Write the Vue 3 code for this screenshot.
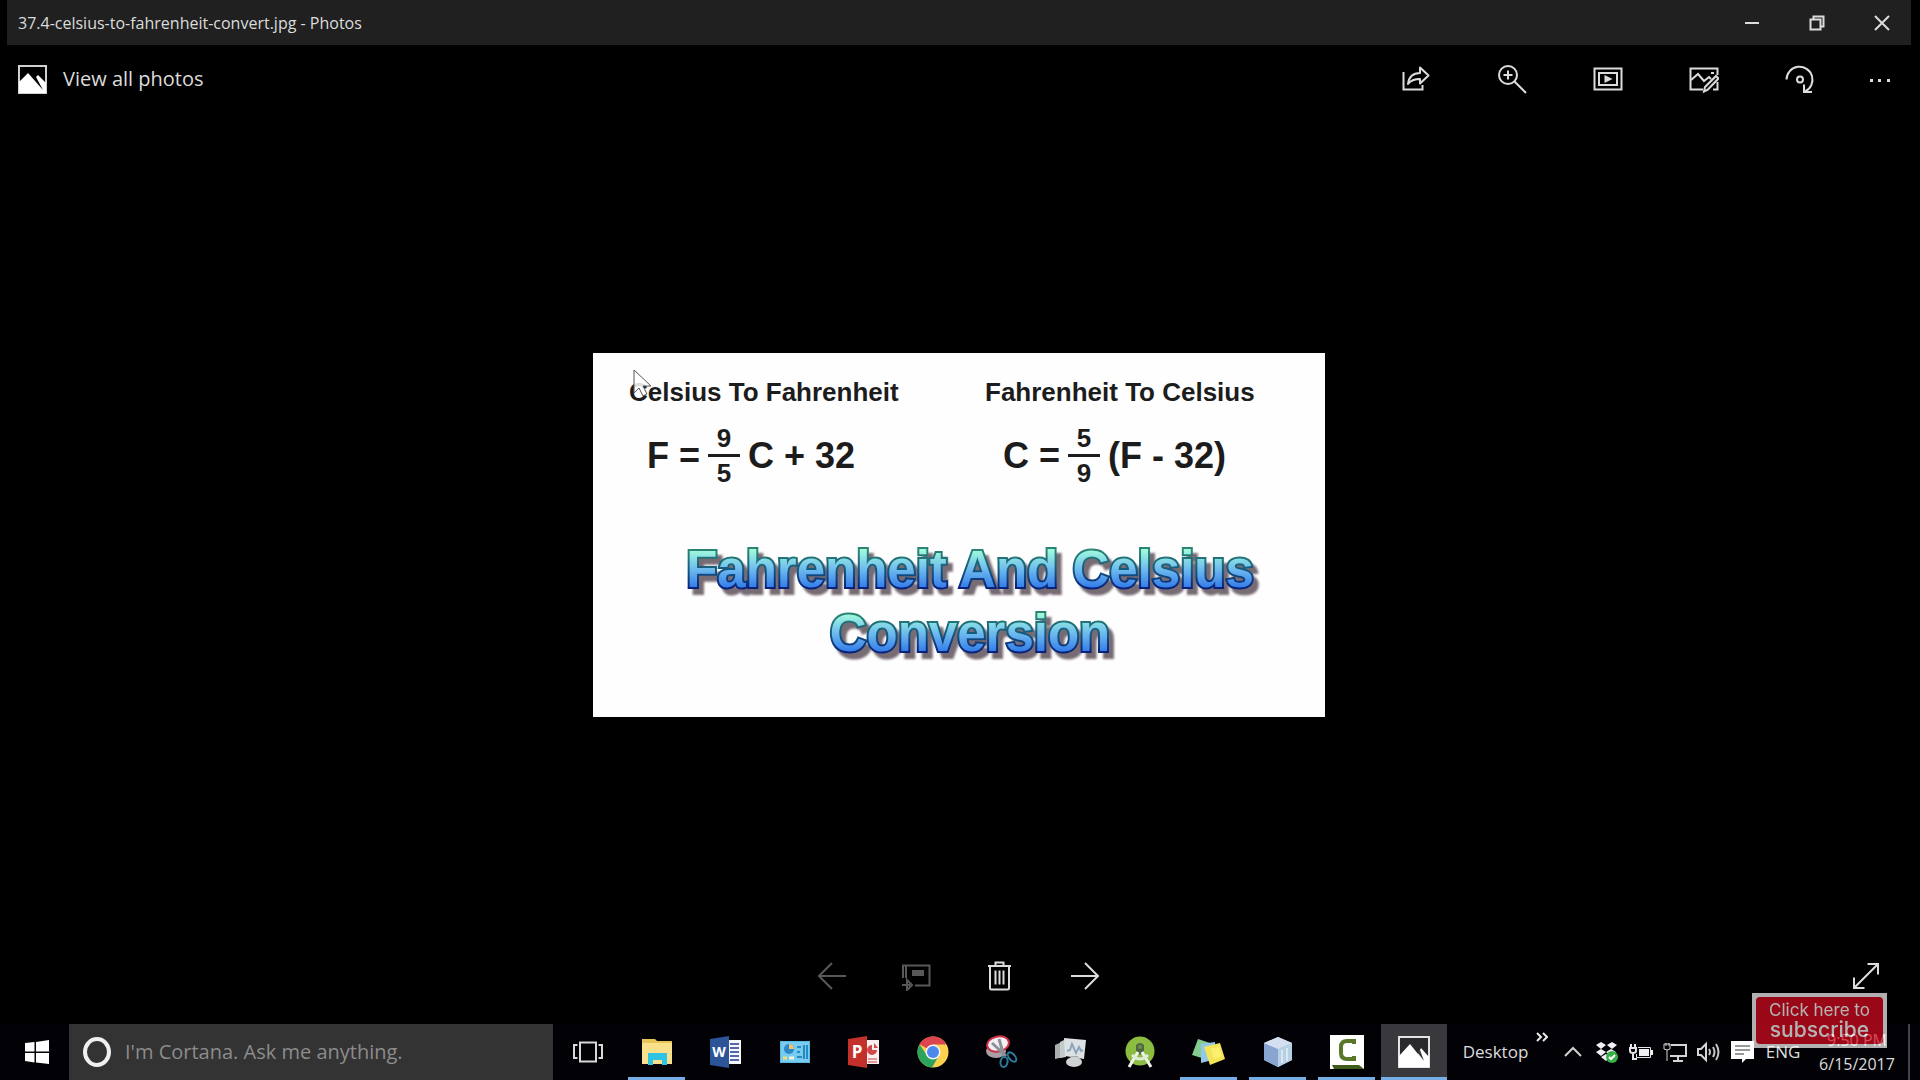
<script setup>
import { ref } from 'vue'

const query = ref('')

const formulas = [
  { title: 'Celsius To Fahrenheit', left: 'F =', top: '9', bottom: '5', right: 'C + 32' },
  { title: 'Fahrenheit To Celsius', left: 'C =', top: '5', bottom: '9', right: '(F - 32)' },
]
</script>

<template>
  <div class="desktop">
    <main class="window">
      <header class="titlebar">
        <h1 class="title">37.4-celsius-to-fahrenheit-convert.jpg - Photos</h1>
        <div class="caption-buttons">
          <button type="button" aria-label="Minimize">
            <svg width="16" height="16" viewBox="0 0 16 16"><path d="M1 8h14" class="line" /></svg>
          </button>
          <button type="button" aria-label="Restore">
            <svg width="16" height="16" viewBox="0 0 16 16">
              <path d="M1.500 4.500h10v10h-10zM4.500 4V1.500h10v10H12" class="line" />
            </svg>
          </button>
          <button type="button" aria-label="Close">
            <svg width="16" height="16" viewBox="0 0 16 16"><path d="M1 1l14 14M15 1L1 15" class="line" /></svg>
          </button>
        </div>
      </header>

      <nav class="commands">
        <a href="#all" class="view-all">
          <svg width="29" height="29" viewBox="0 0 29 29">
            <rect x="1" y="1" width="27" height="27" fill="none" stroke="#d0d0d0" stroke-width="2" />
            <path d="M1 17L10 8l15 17-7-13 2-2 8 8v10H1z" fill="#fff" />
          </svg>
          <span>View all photos</span>
        </a>
        <div class="tools">
          <button type="button" aria-label="Share">
            <svg width="30" height="30" viewBox="0 0 30 30">
              <path d="M2.500 8v17.500h19V21" class="stroke" />
              <path d="M7 20c1-8 5-11 12-11V3.500l8.500 8-8.500 8V15c-6 0-9 1-12 5z" class="stroke" stroke-linejoin="round" />
            </svg>
          </button>
          <button type="button" aria-label="Zoom">
            <svg width="30" height="30" viewBox="0 0 30 30">
              <circle cx="11" cy="11" r="9" class="stroke" />
              <path d="M11 6.500v9M6.500 11h9M17.500 17.500L29 29" class="stroke" />
            </svg>
          </button>
          <button type="button" aria-label="Slideshow">
            <svg width="30" height="30" viewBox="0 0 30 30">
              <path d="M1.500 4.500h27v21h-27z" class="stroke" />
              <path d="M6 9h18v12H6z" class="stroke" />
              <path d="M11.500 11v8l8-4z" fill="#dcdcdc" />
            </svg>
          </button>
          <button type="button" aria-label="Edit">
            <svg width="30" height="30" viewBox="0 0 30 30">
              <path d="M14 25.500H1.500v-21h27V11M24 25.500h4.500V18" class="stroke" />
              <path d="M2 16l7-6 6 7 5-4 2 2" class="stroke" />
              <rect x="22" y="8" width="3" height="2" fill="#dcdcdc" />
              <path d="M16 23L27 12l2.500 2.500L18.500 26 15 27.500z" fill="#111" stroke="#dcdcdc" stroke-width="2" />
            </svg>
          </button>
          <button type="button" aria-label="Rotate">
            <svg width="30" height="30" viewBox="0 0 30 30">
              <path d="M1.500 15.500A13 13 0 1 1 20 27.500" class="stroke" />
              <path d="M19 20.500v7.500h8" class="stroke" />
              <circle cx="15" cy="15.500" r="3" class="stroke" />
            </svg>
          </button>
          <button type="button" class="more" aria-label="See more">
            <svg width="24" height="30" viewBox="0 0 24 30">
              <path d="M2 15h3v3H2zM10 15h3v3h-3zM19 15h3v3h-3z" fill="#dcdcdc" />
            </svg>
          </button>
        </div>
      </nav>

      <section class="stage">
        <figure class="photo">
          <div class="formulas">
            <div v-for="f in formulas" :key="f.title" class="formula">
              <h2>{{ f.title }}</h2>
              <p class="equation">
                <span>{{ f.left }}</span>
                <span class="fraction"><span class="over">{{ f.top }}</span><span class="under">{{ f.bottom }}</span></span>
                <span>{{ f.right }}</span>
              </p>
            </div>
          </div>
          <svg class="wordart" width="620" height="150" viewBox="0 0 620 150">
            <defs>
              <linearGradient id="fill1" gradientUnits="userSpaceOnUse" x1="0" y1="14" x2="0" y2="54">
                <stop offset="0" stop-color="#a0fbdc" /><stop offset="0.5" stop-color="#6cb8ee" /><stop offset="1" stop-color="#2c74e8" />
              </linearGradient>
              <linearGradient id="edge1" gradientUnits="userSpaceOnUse" x1="0" y1="14" x2="0" y2="54">
                <stop offset="0" stop-color="#2c8474" /><stop offset="0.5" stop-color="#145880" /><stop offset="1" stop-color="#081c78" />
              </linearGradient>
              <linearGradient id="fill2" href="#fill1" gradientTransform="translate(0 64)" />
              <linearGradient id="edge2" href="#edge1" gradientTransform="translate(0 64)" />
            </defs>
            <g class="art">
              <text x="321" y="51" fill="url(#fill1)" stroke="url(#edge1)">Fahrenheit And Celsius</text>
              <text x="321" y="115" fill="url(#fill2)" stroke="url(#edge2)">Conversion</text>
            </g>
          </svg>
          <svg class="pointer" width="20" height="30" viewBox="0 0 20 30">
            <path d="M1 1v23l5-5 4 8 4-2-4-8h8z" fill="#fff" fill-opacity="0.85" stroke="#555" stroke-width="1" />
          </svg>
        </figure>
      </section>

      <footer class="actions">
        <div class="pager">
          <button type="button" aria-label="Previous" disabled>
            <svg width="30" height="30" viewBox="0 0 30 30"><path d="M28 15H1M14 2L1 15l13 13" class="stroke" /></svg>
          </button>
          <button type="button" aria-label="Copy to" disabled>
            <svg width="30" height="30" viewBox="0 0 30 30">
              <path d="M1 17V4.500h26.500v20H13M4 4v13" class="stroke" />
              <path d="M0 24h8M5 19l5 5-5 5z" class="stroke" />
              <rect x="10" y="9" width="12" height="6" fill="#dcdcdc" />
            </svg>
          </button>
          <button type="button" aria-label="Delete">
            <svg width="30" height="30" viewBox="0 0 30 30">
              <path d="M2 5h23M9.500 4V1.500h8V4M4 5v22q0 1.500 1.500 1.500h16q1.500 0 1.500-1.500V5" class="stroke" />
              <path d="M9.500 9.500v14M13.500 9.500v14M17.500 9.500v14" class="stroke" />
            </svg>
          </button>
          <button type="button" aria-label="Next">
            <svg width="30" height="30" viewBox="0 0 30 30"><path d="M1 15h27M15 2l13 13-13 13" class="stroke" /></svg>
          </button>
        </div>
        <button type="button" class="expand" aria-label="Full screen">
          <svg width="28" height="28" viewBox="0 0 28 28">
            <path d="M2 26L26 2M15.500 2H26v10.500M2 15.500V26h10.500" class="stroke" />
          </svg>
        </button>
      </footer>
    </main>

    <footer class="taskbar">
      <button type="button" class="start" aria-label="Start">
        <svg width="24" height="24" viewBox="0 0 24 24">
          <path d="M0 3l9.500-1v9.500H0zM11 2l13-2v11.500H11zM0 13h9.500v9.500L0 21zM11 13h13v11l-13-1.500z" fill="#fff" />
        </svg>
      </button>
      <label class="search">
        <svg width="32" height="32" viewBox="0 0 32 32"><ellipse cx="16" cy="16" rx="12" ry="13" fill="none" stroke="#f0f0f0" stroke-width="4" /></svg>
        <input v-model="query" type="text" placeholder="I'm Cortana. Ask me anything." aria-label="Search" />
      </label>

      <div class="apps">
        <button type="button" aria-label="Task view">
          <svg width="32" height="32" viewBox="0 0 32 32">
            <path d="M8 6.500h16v19H8z" fill="none" stroke="#d8d8d8" stroke-width="2" />
            <path d="M5.500 9H2v13h3.500M26.500 9H30v13h-3.500" fill="none" stroke="#d8d8d8" stroke-width="2" />
          </svg>
        </button>
        <button type="button" class="open" aria-label="File Explorer">
          <svg width="32" height="32" viewBox="0 0 32 32">
            <path d="M1 3h13l2 2h15v23H1z" fill="#e8c456" />
            <path d="M1 7h30v21H1z" fill="#fae08a" />
            <path d="M7 17h19v12h-5v-5h-9v5H7z" fill="#30c4e4" />
          </svg>
        </button>
        <button type="button" aria-label="Word">
          <svg width="32" height="32" viewBox="0 0 32 32">
            <path d="M17 4h14v24H17z" fill="#f4f6fc" />
            <path d="M20 8h9M20 12h9M20 16h9M20 20h9M20 24h9" stroke="#5468a8" stroke-width="2" />
            <path d="M0 3l19-3v32L0 29z" fill="#2c5498" />
            <text x="9" y="21" class="letter" font-size="14">W</text>
          </svg>
        </button>
        <button type="button" aria-label="Control Panel">
          <svg width="32" height="32" viewBox="0 0 32 32">
            <path d="M1 5h30v22H1z" fill="#58b8e4" />
            <path d="M2 6h28v20H2z" fill="#78ccf0" />
            <circle cx="10" cy="13" r="5" fill="#2c88c8" /><path d="M10 13V8a5 5 0 0 1 5 5z" fill="#f4c468" />
            <path d="M4 22h4" stroke="#f0e070" stroke-width="3" /><path d="M10 22h5" stroke="#e8f4e0" stroke-width="3" />
            <path d="M18 11h4M18 16h3M18 21h5M25 9v14M28 9v14" stroke="#2888c0" stroke-width="2" />
          </svg>
        </button>
        <button type="button" aria-label="PowerPoint">
          <svg width="32" height="32" viewBox="0 0 32 32">
            <path d="M17 4h14v24H17z" fill="#fbeeee" />
            <path d="M20 23h9M20 26h9" stroke="#c84444" stroke-width="1" />
            <path d="M24 9a5 5 0 1 0 5 5h-5zM26 7v5h4" fill="#d04848" />
            <path d="M0 3l19-3v32L0 29z" fill="#c4302c" />
            <text x="9" y="22" class="letter" font-size="17">P</text>
          </svg>
        </button>
        <button type="button" aria-label="Chrome">
          <svg width="32" height="32" viewBox="0 0 32 32">
            <circle cx="16" cy="16" r="15.500" fill="#fcd050" />
            <path d="M16 16L2.600 8.200A15.500 15.500 0 0 1 29.500 8.500H16z" fill="#dc4450" />
            <path d="M2.600 8.200A15.500 15.500 0 0 0 15 31.500l7-12-12 0z" fill="#2ca45c" />
            <circle cx="16" cy="16" r="7.500" fill="#f4f4f4" /><circle cx="16" cy="16" r="6" fill="#4c88ec" />
          </svg>
        </button>
        <button type="button" aria-label="Snipping Tool">
          <svg width="34" height="34" viewBox="0 0 34 34">
            <ellipse cx="11" cy="16" rx="10" ry="7" fill="#a8a0a4" />
            <ellipse cx="13" cy="9" rx="11" ry="7.500" fill="#f4f0f2" stroke="#cc3048" stroke-width="2" transform="rotate(-12 13 9)" />
            <path d="M7 8l14 13M14 4l5 17" stroke="#8c9098" stroke-width="3" />
            <ellipse cx="19" cy="27" rx="3.500" ry="5" fill="none" stroke="#2c7c9c" stroke-width="2" transform="rotate(12 19 27)" />
            <ellipse cx="27" cy="22" rx="3" ry="5.500" fill="none" stroke="#2c7c9c" stroke-width="2" transform="rotate(-40 27 22)" />
          </svg>
        </button>
        <button type="button" aria-label="Performance Monitor">
          <svg width="34" height="32" viewBox="0 0 34 32">
            <path d="M1 9l9-4v16l-9 2z" fill="#a8b0b0" /><path d="M6 6l6-3v18l-6 1z" fill="#c4caca" />
            <path d="M10 2l22 2-2 19-19-3z" fill="#dce2e4" />
            <path d="M13 15l3-1 2-6 4 9 3-6 2 4 2-1" fill="none" stroke="#8ca4bc" stroke-width="2" />
            <path d="M17 20h7l1 4h-9z" fill="#a4acac" /><ellipse cx="20" cy="26" rx="8" ry="5" fill="#d0d4d4" />
          </svg>
        </button>
        <button type="button" aria-label="Android Studio">
          <svg width="32" height="32" viewBox="0 0 32 32">
            <circle cx="16" cy="15" r="14.500" fill="#8cbc40" />
            <path d="M12 9q4-4 8 0v6l-4 4-4-4z" fill="#506840" /><circle cx="16" cy="11" r="2" fill="#708c50" />
            <path d="M14 16L5 31M18 16l9 15" stroke="#f0f4ec" stroke-width="3" />
            <path d="M8 19q8 8 16 0" fill="none" stroke="#e0ecd8" stroke-width="3" />
          </svg>
        </button>
        <button type="button" class="open" aria-label="Sticky Notes">
          <svg width="34" height="32" viewBox="0 0 34 32">
            <path d="M6 3l12 4-5 16L0 19z" fill="#84cc90" />
            <path d="M9 8l14-2 1 17-15 4z" fill="#94c8e8" />
            <path d="M12 11l16-4 5 16-15 6z" fill="#f4e458" /><path d="M19 13l8-2 3 9-8 3z" fill="#fcf070" />
          </svg>
        </button>
        <button type="button" class="open" aria-label="NetBeans">
          <svg width="32" height="32" viewBox="0 0 32 32">
            <path d="M16 1l14 6v17l-14 7L2 24V7z" fill="#b4c8e4" />
            <path d="M2 7l14 6v18L2 24z" fill="#88a4d0" /><path d="M16 1l14 6-14 6L2 7z" fill="#d4e0f0" />
            <path d="M16 13l14-6v17l-14 7z" fill="#b8d0e4" /><path d="M20 14v13M25 12v13" stroke="#d8e8f0" stroke-width="2" />
          </svg>
        </button>
        <button type="button" class="open" aria-label="Camtasia">
          <svg width="34" height="34" viewBox="0 0 34 34">
            <path d="M0 0h34v34H0z" fill="#fff" /><path d="M2 30h27l5 4H4z" fill="#405c1c" />
            <path d="M24 9V6h-7q-6 0-6 6v6q0 6 6 6h7v-3" fill="none" stroke="#587828" stroke-width="4" />
          </svg>
        </button>
        <button type="button" class="open active" aria-label="Photos">
          <svg width="32" height="32" viewBox="0 0 32 32">
            <rect x="1" y="1" width="30" height="30" fill="#2a2a2e" stroke="#e4e4e4" stroke-width="2" />
            <path d="M1 20L12 8l8 10 3-6 8 9v10H1z" fill="#fff" /><path d="M19 16l7 9-4-11z" fill="#38383c" />
          </svg>
        </button>
      </div>

      <div class="tray">
        <button type="button" class="desk">Desktop</button>
        <button type="button" class="chevrons" aria-label="More toolbars">
          <svg width="12" height="10" viewBox="0 0 12 10"><path d="M1 1l4 4-4 4M7 1l4 4-4 4" fill="none" stroke="#e8e8e8" stroke-width="2" /></svg>
        </button>
        <button type="button" class="slot" aria-label="Show hidden icons">
          <svg width="24" height="24" viewBox="0 0 24 24"><path d="M4 16l8-8 8 8" fill="none" stroke="#d0d0d0" stroke-width="2" /></svg>
        </button>
        <button type="button" class="slot" aria-label="Dropbox">
          <svg width="24" height="24" viewBox="0 0 24 24">
            <path d="M6 2l5 3-5 4-5-4zM17 2l5 3-5 4-5-4zM6 9l5 3-5 4-5-4zM16 9l5 3-5 4-5-4zM11 14l5 3-5 4-5-4z" fill="#f4f0fa" />
            <circle cx="17" cy="17" r="6" fill="#38b048" /><path d="M14 17l2 2 4-4" fill="none" stroke="#fff" stroke-width="2" />
          </svg>
        </button>
        <button type="button" class="slot" aria-label="Battery">
          <svg width="24" height="24" viewBox="0 0 24 24">
            <path d="M2 4v4M6 4v4M1 8h6v3q0 2-3 2t-3-2zM4 13v6h4" fill="none" stroke="#e4e4e4" stroke-width="2" />
            <path d="M9 7.500h12.500v10H7.500V14" fill="none" stroke="#e4e4e4" stroke-width="1" />
            <path d="M10 9h10v7H10zM22 10h2v5h-2z" fill="#f0f0f0" />
          </svg>
        </button>
        <button type="button" class="slot" aria-label="Network">
          <svg width="26" height="24" viewBox="0 0 26 24">
            <path d="M9 5h15v11H8M16 16v5M11 21h10" fill="none" stroke="#d4d4d4" stroke-width="2" />
            <path d="M2 4h6v5q-3 2-6 0zM5 10v11M4 3v3M7 3v3" fill="none" stroke="#d4d4d4" stroke-width="1" />
          </svg>
        </button>
        <button type="button" class="slot" aria-label="Volume">
          <svg width="26" height="24" viewBox="0 0 26 24">
            <path d="M2 9h3l5-5v16l-5-5H2z" fill="none" stroke="#d4d4d4" stroke-width="2" />
            <path d="M13 9q2 3 0 6M17 7q3 5 0 10M20 4q5 8 0 16" fill="none" stroke="#c4c4c4" stroke-width="2" />
          </svg>
        </button>
        <button type="button" class="slot" aria-label="Notifications">
          <svg width="24" height="24" viewBox="0 0 24 24">
            <path d="M0 1h23v18h-8l-4 4v-4H0z" fill="#fff" /><path d="M4 6h15M4 10h15M4 14h9" stroke="#333" stroke-width="1" />
          </svg>
        </button>
        <button type="button" class="lang">ENG</button>
        <button type="button" class="clock"><time>9:50 PM</time><time>6/15/2017</time></button>
        <button type="button" class="peek" aria-label="Show desktop"></button>
      </div>
    </footer>

    <a href="#subscribe" class="subscribe">
      <span class="label">
        <span class="small">Click here to</span>
        <span class="big">subscribe</span>
      </span>
    </a>
  </div>
</template>

<style>
body {
  background: #000;
}
</style>

<style scoped>
.desktop {
  position: relative;
  display: flex;
  flex-direction: column;
  min-height: 100vh;
  background: #000;
  color: #dcdcdc;
  font-family: "Open Sans", "Noto Sans", sans-serif;
}

button {
  display: flex;
  align-items: center;
  justify-content: center;
  padding: 0;
  border: 0;
  background: none;
  color: inherit;
  font: inherit;
}

svg {
  display: block;
  flex: none;
}

.line {
  fill: none;
  stroke: #dcdcdc;
  stroke-width: 2;
}

.stroke {
  fill: none;
  stroke: #dcdcdc;
  stroke-width: 2;
}

.window {
  display: flex;
  flex: 1;
  flex-direction: column;
  margin: 0 9px 0 7px;
}

.titlebar {
  display: flex;
  align-items: center;
  justify-content: space-between;
  height: 45px;
  padding: 0 5px 0 11px;
  background: #202020;
}

.title {
  margin: 0;
  font-size: 16px;
  font-weight: 400;
  line-height: 20px;
}

.caption-buttons {
  display: flex;
  gap: 17px;
}

.caption-buttons button {
  width: 48px;
  height: 45px;
}

.commands {
  display: flex;
  align-items: center;
  justify-content: space-between;
  height: 68px;
}

.view-all {
  display: flex;
  align-items: center;
  gap: 16px;
  padding-left: 11px;
  color: inherit;
  font-size: 20px;
  line-height: 28px;
  text-decoration: none;
}

.tools {
  display: flex;
}

.tools button {
  width: 96px;
  height: 68px;
}

.tools .more {
  width: 63px;
}

.stage {
  display: flex;
  flex: 1;
  align-items: center;
  justify-content: center;
}

.photo {
  position: relative;
  box-sizing: border-box;
  width: 732px;
  height: 364px;
  margin: 0;
  padding-top: 23px;
  background: #fefefe;
  color: #1c1c1c;
  font-family: "Liberation Sans", sans-serif;
}

.formulas {
  display: grid;
  grid-template-columns: 356px 1fr;
  padding-left: 36px;
}

.formula h2 {
  margin: 0;
  font-size: 26px;
  font-weight: 700;
  line-height: 32px;
}

.equation {
  display: flex;
  align-items: center;
  gap: 8px;
  height: 64px;
  margin: 16px 0 0 18px;
  font-size: 36px;
  font-weight: 700;
  white-space: pre;
}

.fraction {
  display: flex;
  flex-direction: column;
  width: 32px;
  font-size: 26px;
  line-height: 32px;
  text-align: center;
}

.over {
  border-bottom: 3px solid #1c1c1c;
}

.wordart {
  margin: 48px 0 0 56px;
}

.art {
  filter: drop-shadow(5px 6px 1px #786c74);
}

.art text {
  font-family: "Liberation Sans", sans-serif;
  font-size: 51px;
  font-weight: 700;
  paint-order: stroke;
  stroke-width: 4;
  text-anchor: middle;
}

.pointer {
  position: absolute;
  top: 16px;
  left: 40px;
}

.actions {
  display: grid;
  grid-template-columns: 1fr auto 1fr;
  align-items: start;
  height: 68px;
}

.pager {
  display: flex;
  grid-column: 2;
}

.pager button {
  width: 84px;
  height: 40px;
}

.pager button:disabled {
  opacity: 0.4;
}

.expand {
  justify-self: end;
  width: 90px;
  height: 40px;
}

.taskbar {
  display: flex;
  height: 56px;
  padding-left: 4px;
  background: #020206;
}

.start {
  width: 65px;
}

.search {
  display: flex;
  flex: 0 1 484px;
  align-items: center;
  gap: 12px;
  box-sizing: border-box;
  padding-left: 12px;
  background: #333;
}

.search input {
  flex: 1;
  min-width: 0;
  padding: 0;
  border: 0;
  outline: 0;
  background: none;
  color: #ddd;
  font: 20px/28px "Open Sans", "Noto Sans", sans-serif;
}

.search input::placeholder {
  color: #8c8c8c;
  opacity: 1;
}

.apps {
  display: flex;
}

.apps button {
  position: relative;
  width: 69px;
  height: 56px;
}

.apps .open::after {
  content: "";
  position: absolute;
  right: 6px;
  bottom: 0;
  left: 6px;
  height: 3px;
  background: #74aee4;
}

.apps .active {
  width: 66px;
  background: #38383d;
}

.apps .active::after {
  right: 0;
  left: 0;
}

.letter {
  fill: #fff;
  font-family: "Open Sans", sans-serif;
  font-weight: 700;
  text-anchor: middle;
}

.tray {
  display: flex;
  margin-left: auto;
  font-size: 17px;
  line-height: 24px;
}

.desk {
  width: 86px;
  padding-left: 5px;
}

.chevrons {
  align-items: flex-start;
  justify-content: flex-start;
  width: 20px;
  padding-top: 8px;
}

.slot {
  width: 34px;
}

.lang {
  width: 46px;
}

.clock {
  flex-direction: column;
  width: 102px;
  font-size: 16px;
}

.peek {
  width: 12px;
  border-left: 2px solid #444448;
}

.subscribe {
  position: absolute;
  right: 33px;
  bottom: 32px;
  box-sizing: border-box;
  width: 135px;
  height: 55px;
  padding: 4px;
  background: #fbfbfb;
  color: #fff;
  font-family: Inter, sans-serif;
  opacity: 0.7;
  text-decoration: none;
}

.label {
  display: flex;
  flex-direction: column;
  align-items: center;
  box-sizing: border-box;
  height: 47px;
  padding-top: 3px;
  border-radius: 4px;
  background: #dc0b20;
}

.small {
  font-size: 17px;
  line-height: 20px;
}

.big {
  font-size: 21px;
  font-weight: 500;
  line-height: 20px;
}
</style>
